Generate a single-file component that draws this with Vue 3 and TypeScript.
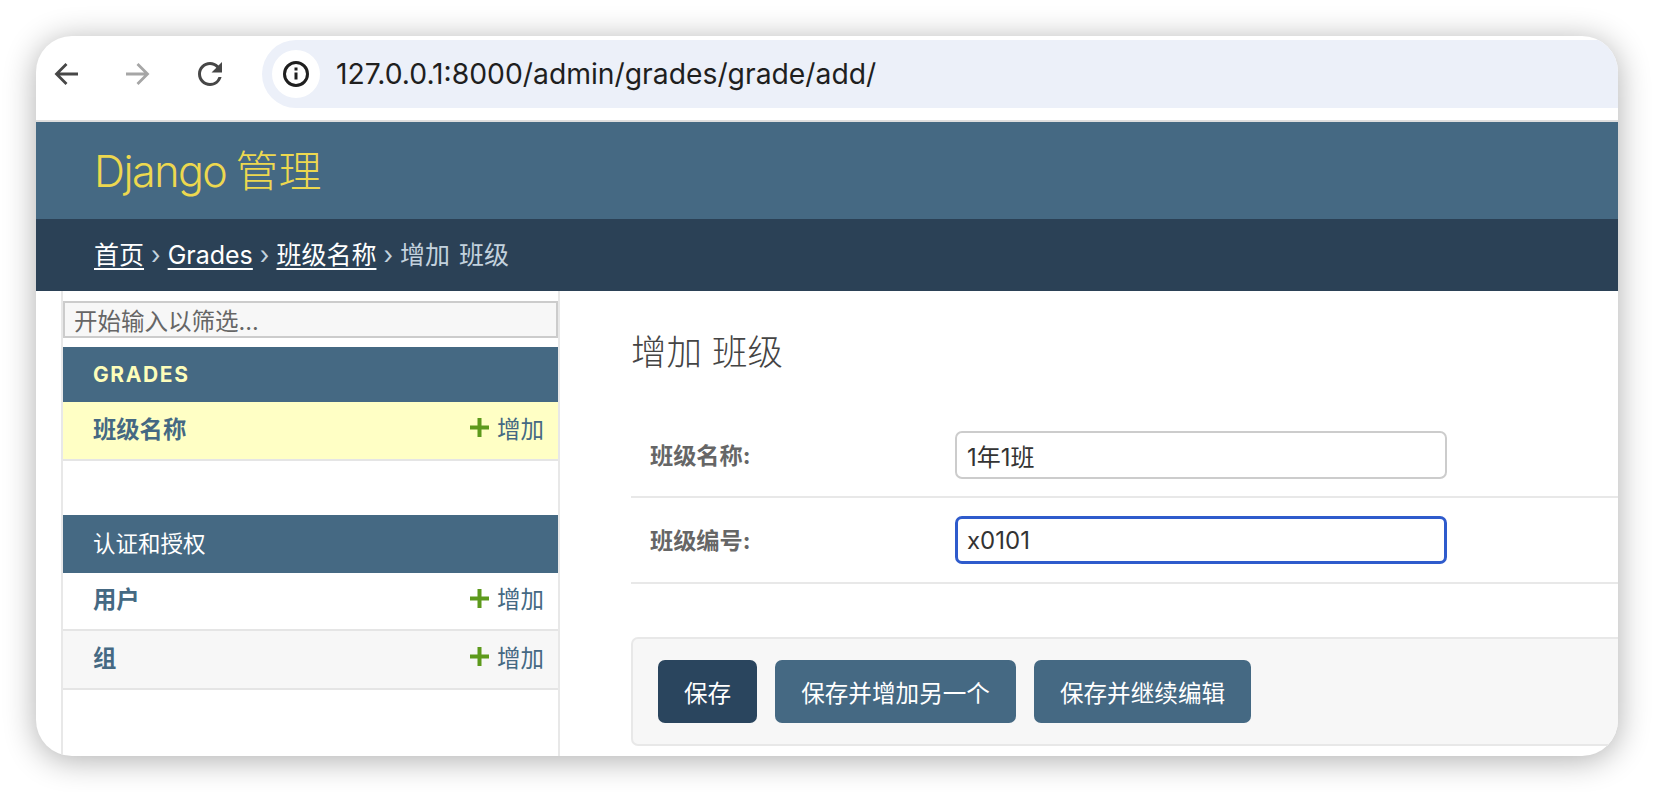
<script setup lang="ts">
interface Row { name: string; tone: string }
const gradeRows: Row[] = [{ name: '班级名称', tone: 'current' }]
const authRows: Row[] = [
  { name: '用户', tone: 'plain' },
  { name: '组', tone: 'alt' },
]
const fields = [
  { label: '班级名称:', value: '1年1班', focused: false },
  { label: '班级编号:', value: 'x0101', focused: true },
]
</script>

<template>
  <div class="page">
    <div class="window">
      <div class="toolbar">
        <svg class="nav" viewBox="0 0 24 24" fill="none" stroke="#474747" stroke-width="2.8">
          <path d="M24 12H3M12.5 2 2.5 12l10 10" />
        </svg>
        <svg class="nav" viewBox="0 0 24 24" fill="none" stroke="#a6a6a6" stroke-width="2.8">
          <path d="M0 12h21M11.5 2l10 10-10 10" />
        </svg>
        <svg class="nav" viewBox="4 4 16 16" fill="#474747">
          <path d="M17.65 6.35A7.958 7.958 0 0 0 12 4c-4.42 0-7.99 3.58-7.99 8s3.57 8 7.99 8c3.73 0 6.84-2.55 7.73-6h-2.08A5.99 5.99 0 0 1 12 18c-3.31 0-6-2.69-6-6s2.69-6 6-6c1.66 0 3.14.69 4.22 1.78L13 11h7V4l-2.35 2.35z" />
        </svg>
        <div class="address">
          <div class="site-info">
            <svg viewBox="0 0 26 26" width="26" height="26" fill="none" stroke="#1f1f1f" stroke-width="3">
              <circle cx="13" cy="13" r="11.5" />
              <path d="M13 11.5v7" />
              <path d="M13 6.6v3" />
            </svg>
          </div>
          <span class="url">127.0.0.1:8000/admin/grades/grade/add/</span>
        </div>
      </div>

      <header class="branding"><span class="latin">Django</span> 管理</header>
      <nav class="crumbs">
        <a>首页</a><span class="sep">›</span><a>Grades</a><span class="sep">›</span><a>班级名称</a><span class="sep">›</span><span class="here">增加 班级</span>
      </nav>

      <div class="body">
        <aside class="sidebar">
          <input class="filter" type="text" placeholder="开始输入以筛选..." />
          <section class="module">
            <h2 class="caption grades">GRADES</h2>
            <div v-for="row in gradeRows" :key="row.name" class="row" :class="row.tone">
              <strong>{{ row.name }}</strong>
              <span class="add">
                <svg viewBox="0 0 19 19" width="19" height="19" fill="none" stroke="#5d9a1c" stroke-width="4"><path d="M9.5 0v19M0 9.5h19" /></svg>增加
              </span>
            </div>
          </section>
          <section class="module second">
            <h2 class="caption">认证和授权</h2>
            <div v-for="row in authRows" :key="row.name" class="row" :class="row.tone">
              <strong>{{ row.name }}</strong>
              <span class="add">
                <svg viewBox="0 0 19 19" width="19" height="19" fill="none" stroke="#5d9a1c" stroke-width="4"><path d="M9.5 0v19M0 9.5h19" /></svg>增加
              </span>
            </div>
          </section>
        </aside>

        <main class="content">
          <h1 class="title">增加 班级</h1>
          <div class="fields">
            <div v-for="f in fields" :key="f.label" class="field">
              <label class="label">{{ f.label }}</label>
              <input class="text" :class="{ focused: f.focused }" type="text" :value="f.value" />
            </div>
          </div>
          <div class="submit">
            <button class="btn primary" type="button">保存</button>
            <button class="btn" type="button">保存并增加另一个</button>
            <button class="btn" type="button">保存并继续编辑</button>
          </div>
        </main>
      </div>
    </div>
  </div>
</template>

<style>
html, body { margin: 0; background: #fff; }
</style>

<style scoped>
.page {
  width: 1654px;
  height: 792px;
  padding: 36px;
  box-sizing: border-box;
  overflow: hidden;
  font-family: Inter, "Noto Sans CJK SC", sans-serif;
}
.window {
  width: 1582px;
  height: 720px;
  border-radius: 36px;
  overflow: hidden;
  background: #fff;
  box-shadow: 0 4px 32px rgba(0, 0, 0, 0.32);
  display: flex;
  flex-direction: column;
}
.toolbar {
  height: 84px;
  flex: none;
  display: flex;
  align-items: flex-start;
  padding-left: 18px;
  gap: 48px;
  border-bottom: 2px solid #dedede;
  box-sizing: content-box;
}
.nav { width: 24px; height: 24px; margin-top: 26px; flex: none; }
.address {
  margin-left: -8px;
  margin-top: 4px;
  flex: 1;
  height: 68px;
  background: #ecf0f9;
  border-radius: 34px 0 0 34px;
  display: flex;
  align-items: center;
  padding-left: 10px;
}
.site-info {
  width: 48px;
  height: 48px;
  border-radius: 50%;
  background: #fff;
  display: flex;
  align-items: center;
  justify-content: center;
}
.url { margin-left: 16px; font-size: 28.3px; color: #1f1f1f; }

.branding {
  height: 97px;
  flex: none;
  box-sizing: border-box;
  padding-left: 58px;
  background: #456983;
  color: #edd84f;
  font-size: 43px;
  font-weight: 300;
  line-height: 99px;
  word-spacing: -3px;
}
.latin { letter-spacing: -1.5px; }
.crumbs {
  height: 72px;
  flex: none;
  box-sizing: border-box;
  padding-left: 58px;
  background: #2b4156;
  color: #c3d2de;
  font-size: 25px;
  line-height: 72px;
}
.crumbs a { color: #fff; text-decoration: underline; text-underline-offset: 4px; }
.here { word-spacing: 2px; }
.sep { margin: 0 7px; }

.body { flex: 1; display: flex; min-height: 0; }
.sidebar {
  width: 495px;
  margin-left: 25px;
  flex: none;
  border-left: 2px solid #e8e8e8;
  border-right: 2px solid #e8e8e8;
  box-sizing: content-box;
  padding-top: 10px;
}
.filter {
  display: block;
  width: 100%;
  height: 37px;
  box-sizing: border-box;
  border: 2px solid #cccccc;
  background: #f7f7f7;
  padding: 3px 9px 0;
  font: 23.5px Inter, "Noto Sans CJK SC", sans-serif;
  color: #666;
  outline: none;
}
.filter::placeholder { color: #666; opacity: 1; }
.module { margin-top: 9px; }
.module.second { margin-top: 54px; }
.caption {
  margin: 0;
  height: 58px;
  box-sizing: border-box;
  padding: 0 0 4px 30px;
  display: flex;
  align-items: center;
  background: #456983;
  color: #fff;
  font-size: 22.5px;
  font-weight: 400;
}
.caption.grades {
  height: 55px;
  padding-bottom: 0;
  color: #fdfdba;
  font-size: 21px;
  font-weight: 700;
  letter-spacing: 1.6px;
}
.row {
  height: 58.5px;
  box-sizing: border-box;
  border-bottom: 2px solid #e5e5e5;
  padding: 0 14px 5px 30px;
  display: flex;
  align-items: center;
  justify-content: space-between;
  color: #456983;
  font-size: 23.3px;
}
.row strong { font-weight: 700; }
.row.current { background: #ffffc5; }
.row.alt { background: #f7f7f7; }
.add { display: flex; align-items: center; gap: 8px; font-size: 23.5px; }

.content { flex: 1; min-width: 0; padding-left: 71px; }
.title {
  margin: 39px 0 0;
  font-size: 35.5px;
  font-weight: 300;
  line-height: 46px;
  color: #444;
}
.fields { margin-top: 38px; margin-right: -12px; }
.field {
  height: 84px;
  box-sizing: border-box;
  border-bottom: 2px solid #e8e8e8;
  display: flex;
  align-items: center;
  padding-left: 19px;
}
.field:last-child { height: 86px; }
.label { width: 305px; flex: none; margin-top: -2px; font-size: 23.2px; font-weight: 700; color: #666; }
.text {
  width: 492px;
  height: 48px;
  box-sizing: border-box;
  border: 2px solid #cccccc;
  border-radius: 7px;
  padding: 0 10px;
  font: 24px Inter, "Noto Sans CJK SC", sans-serif;
  color: #333;
  outline: none;
  background: #fff;
}
.text.focused { border: 3px solid #2f5bcc; padding: 0 9px; }
.submit {
  margin-top: 53px;
  margin-right: -12px;
  height: 109px;
  box-sizing: border-box;
  border: 2px solid #e8e8e8;
  border-radius: 7px;
  background: #f7f7f7;
  display: flex;
  align-items: center;
  gap: 18px;
  padding-left: 25px;
}
.btn {
  height: 63px;
  border: none;
  border-radius: 7px;
  background: #456983;
  color: #fff;
  padding: 0 26px;
  font: 23.6px Inter, "Noto Sans CJK SC", sans-serif;
}
.btn.primary { background: #2a455e; }
</style>
